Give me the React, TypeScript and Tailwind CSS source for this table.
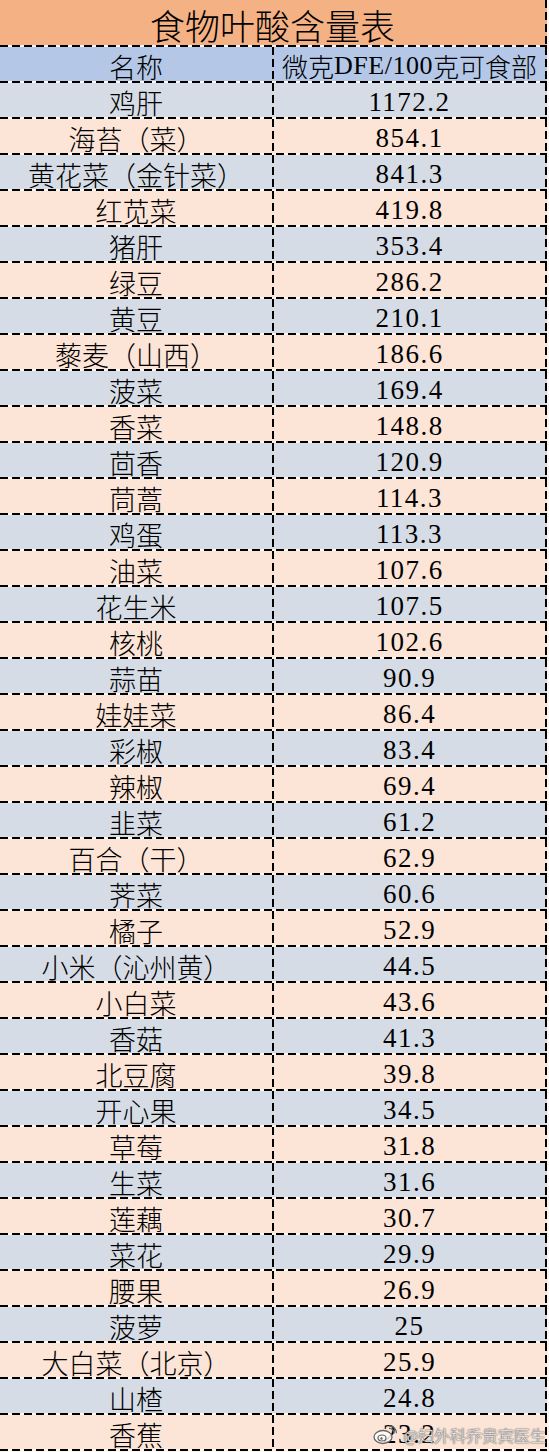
import React from 'react';

const rows: [string, string][] = [
  ['鸡肝', '1172.2'],
  ['海苔（菜）', '854.1'],
  ['黄花菜（金针菜）', '841.3'],
  ['红苋菜', '419.8'],
  ['猪肝', '353.4'],
  ['绿豆', '286.2'],
  ['黄豆', '210.1'],
  ['藜麦（山西）', '186.6'],
  ['菠菜', '169.4'],
  ['香菜', '148.8'],
  ['茴香', '120.9'],
  ['茼蒿', '114.3'],
  ['鸡蛋', '113.3'],
  ['油菜', '107.6'],
  ['花生米', '107.5'],
  ['核桃', '102.6'],
  ['蒜苗', '90.9'],
  ['娃娃菜', '86.4'],
  ['彩椒', '83.4'],
  ['辣椒', '69.4'],
  ['韭菜', '61.2'],
  ['百合（干）', '62.9'],
  ['荠菜', '60.6'],
  ['橘子', '52.9'],
  ['小米（沁州黄）', '44.5'],
  ['小白菜', '43.6'],
  ['香菇', '41.3'],
  ['北豆腐', '39.8'],
  ['开心果', '34.5'],
  ['草莓', '31.8'],
  ['生菜', '31.6'],
  ['莲藕', '30.7'],
  ['菜花', '29.9'],
  ['腰果', '26.9'],
  ['菠萝', '25'],
  ['大白菜（北京）', '25.9'],
  ['山楂', '24.8'],
  ['香蕉', '23.2'],
];

const cjk = "font-['Noto_Sans_CJK_SC',sans-serif] font-light";
const num = "font-['Liberation_Serif','Noto_Sans_CJK_SC',serif] font-normal";

// dashed lines, Excel style
const HLine = () => (
  <div className="h-[2px] w-[547px] bg-[repeating-linear-gradient(90deg,#000_0_8px,transparent_8px_12px)]" />
);
const VLine = ({ bg }: { bg: string }) => (
  <div className={`w-[2px] h-full ${bg}`}>
    <div className="w-[2px] h-full bg-[repeating-linear-gradient(180deg,#000_0_8px,transparent_8px_12px)]" />
  </div>
);

function Row({ name, value, bg }: { name: string; value: string; bg: string }) {
  return (
    <>
      <div className="flex h-[34px]">
        <div className={`w-[272px] flex items-center justify-center pt-[4px] text-[27px] leading-none text-black ${cjk} ${bg}`}>
          {name}
        </div>
        <VLine bg={bg} />
        <div className={`w-[271px] flex items-center justify-center pt-[4px] text-[27px] leading-none tracking-[1.5px] text-black ${num} ${bg}`}>
          {value}
        </div>
        <VLine bg={bg} />
      </div>
      <HLine />
    </>
  );
}

function Watermark() {
  return (
    <div className="absolute right-[1px] bottom-[6px] flex items-center gap-[6px] pointer-events-none">
      <svg width="24" height="20" viewBox="0 0 24 20">
        <ellipse cx="10" cy="12" rx="9" ry="6.5" fill="#fff" fillOpacity="0.8" stroke="#666" strokeWidth="1.3" />
        <ellipse cx="9" cy="13" rx="4" ry="3" fill="none" stroke="#666" strokeWidth="1.2" />
        <circle cx="8.5" cy="13.5" r="1.2" fill="#666" />
        <path d="M16 3.5 a4.5 4.5 0 0 1 5 5" fill="none" stroke="#666" strokeWidth="1.3" />
        <path d="M16 0.8 a7.5 7.5 0 0 1 7.5 7.5" fill="none" stroke="#666" strokeWidth="1.3" />
      </svg>
      <span
        className={`text-[16px] leading-none text-white/90 ${cjk} [text-shadow:0_0_1px_#555,0_0_1px_#555,0_0_2px_#888]`}
      >
        @妇外科乔贵宾医生
      </span>
    </div>
  );
}

export default function App() {
  return (
    <div className="w-[549px] h-[1452px] bg-[#fbf6f2] overflow-hidden">
      <div className="relative w-[547px]">
        {/* 标题 */}
        <div className="flex h-[45px]">
          <div className={`w-[545px] flex items-center justify-center pt-[3px] bg-[#f4b183] text-[35px] leading-none text-black ${cjk}`}>
            食物叶酸含量表
          </div>
          <VLine bg="bg-[#f4b183]" />
        </div>
        <HLine />

        {/* 表头 */}
        <div className="flex h-[34px]">
          <div className={`w-[272px] flex items-center justify-center pt-[4px] bg-[#b4c7e7] text-[27px] leading-none text-black ${cjk}`}>
            名称
          </div>
          <VLine bg="bg-[#b4c7e7]" />
          <div className={`w-[271px] flex items-center justify-center pt-[4px] bg-[#b4c7e7] text-[26px] leading-none text-black whitespace-nowrap ${cjk}`}>
            微克<span className={`${num} tracking-[0.5px]`}>DFE/100</span>克可食部
          </div>
          <VLine bg="bg-[#b4c7e7]" />
        </div>
        <HLine />

        {rows.map(([name, value], i) => (
          <Row key={name} name={name} value={value} bg={i % 2 === 0 ? 'bg-[#d6dce5]' : 'bg-[#fce4d6]'} />
        ))}

        <Watermark />
      </div>
    </div>
  );
}
